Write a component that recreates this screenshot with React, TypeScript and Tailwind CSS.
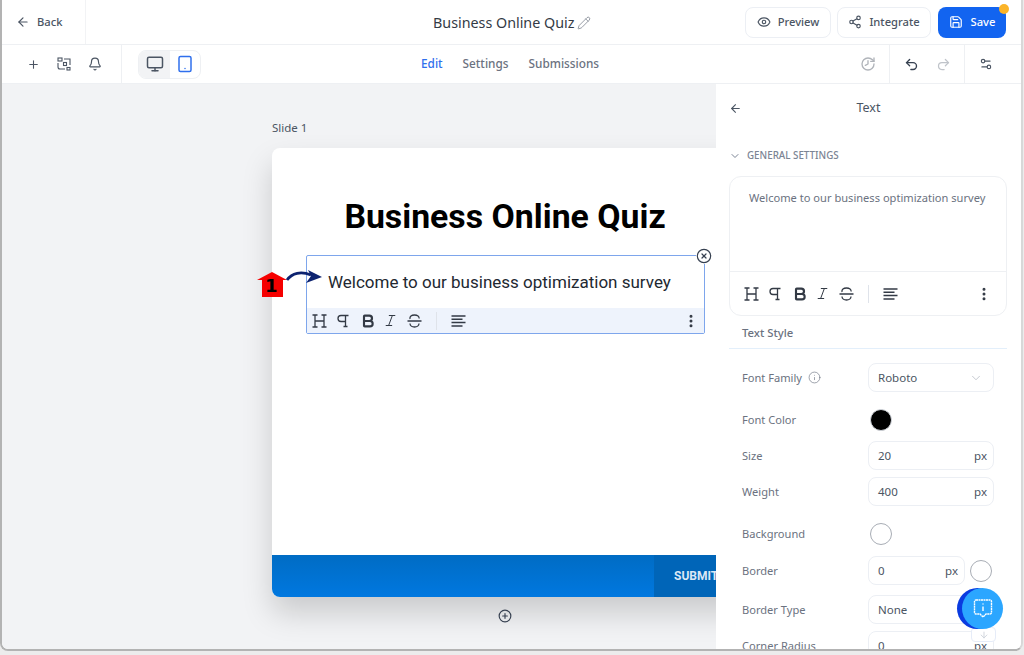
import { ArrowLeft, ArrowDown, Plus, Bell, Monitor, Tablet, Pencil, Eye, Share2, Save, History, Undo2, Redo2, Settings2, ChevronDown, Info, Bold, Italic, EllipsisVertical, CircleX, CirclePlus } from "lucide-react";

const ui = "font-['Noto_Sans','Open_Sans',sans-serif]";

function Toolbar({ className }: { className: string }) {
  return (
    <div className={`flex items-center text-[#333a45] ${className}`}>
      <svg width="15" height="16" viewBox="0 0 15 16" fill="none" stroke="currentColor" strokeWidth="1.3" className="mr-[10px]">
        <path d="M3 2v12M12 2v12M3 8h9M0.500 2h5M9.500 2h5M0.500 14h5M9.500 14h5" />
      </svg>
      <svg width="12" height="16" viewBox="0 0 12 16" fill="none" stroke="currentColor" strokeWidth="1.3" className="mr-[11px]">
        <path d="M11.500 2.500H4a3 3 0 0 0 0 6h4.500M8.500 2.500v11M6.500 13.500h4" />
      </svg>
      <Bold size={16} strokeWidth={3.2} className="mr-[7px]" />
      <Italic size={15} strokeWidth={1.6} className="mr-[9px]" />
      <svg width="15" height="16" viewBox="0 0 15 16" fill="none" stroke="currentColor" strokeWidth="1.3">
        <path d="M0.500 8h14M3 6c-.5-2.500 1.500-4 4.500-4s5 1.500 4.500 3.500M3 10.500c0 2 2 3.500 4.500 3.500s4.500-1.500 4.500-3.500" />
      </svg>
      <div className="mx-[14px] h-[18px] w-px bg-[#dfe3ea]" />
      <svg width="15" height="12" viewBox="0 0 15 12" fill="none" stroke="currentColor" strokeWidth="1.5">
        <path d="M0.500 1h14M0.500 4.300h11M0.500 7.600h14M0.500 11h11" />
      </svg>
      <EllipsisVertical size={16} strokeWidth={2.5} className="ml-auto" />
    </div>
  );
}

function Field({ value, unit, chevron, width = "w-[126px]" }: { value: string; unit?: string; chevron?: boolean; width?: string }) {
  return (
    <div className={`flex h-[29px] ${width} shrink-0 items-center justify-between rounded-lg border border-[#eceff4] bg-white pl-[9px] pr-[6px] text-[11.500px] leading-[15px] text-[#4b5563]`}>
      <span className="-mt-[1px]">{value}</span>
      {unit ? <span>{unit}</span> : null}
      {chevron ? <ChevronDown size={14} strokeWidth={1} className="mr-1 text-[#9ca3af]" /> : null}
    </div>
  );
}

function Row({ label, className, children }: { label: React.ReactNode; className: string; children: React.ReactNode }) {
  return (
    <div className={`flex items-center ${className}`}>
      <span className="flex w-[126px] shrink-0 items-center gap-[6px] pt-[1px] text-[11.100px] text-[#6b7280]">{label}</span>
      {children}
    </div>
  );
}

export default function App() {
  return (
    <div className={`h-[655px] w-[1024px] overflow-hidden bg-[#ececec] ${ui}`}>
      <div className="h-[651px] w-[1023px] overflow-hidden rounded-b-lg border-b-2 border-l-2 border-r-2 border-b-[#b3b3b3] border-l-[#b3b3b3] border-r-[#d8d8d8] bg-white">
        <div className="flex h-[45px] items-center border-b border-[#eef0f3]">
          <div className="flex h-full w-[84px] items-center gap-[7px] border-r border-[#f2f3f5] pl-[14px] text-[11.200px] font-medium text-[#4b5563]">
            <ArrowLeft size={14} />
            <span>Back</span>
          </div>
          <div className="flex flex-1 items-center pl-[347px] pt-[2px] text-[14.300px] text-[#333a45]">
            <span>Business Online Quiz</span>
            <Pencil size={14} strokeWidth={1.2} className="ml-[3px] text-[#6b7280]" />
          </div>
          <div className="flex items-center gap-[6px] pr-[15px]">
            <div className="flex h-[31px] w-[86px] items-center justify-center gap-[7px] rounded-lg border border-[#eceff4] text-[11.200px] font-medium text-[#4b5563]">
              <Eye size={14} /> Preview
            </div>
            <div className="flex h-[31px] w-[94px] items-center justify-center gap-[7px] rounded-lg border border-[#eceff4] text-[11.200px] font-medium text-[#4b5563]">
              <Share2 size={14} /> Integrate
            </div>
            <div className="relative ml-px flex h-[31px] w-[68px] items-center justify-center gap-[8px] rounded-lg bg-[#1264f0] text-[11.200px] font-medium text-white">
              <Save size={14} /> Save
              <span className="absolute -right-[3px] -top-[3px] h-[10px] w-[10px] rounded-full bg-[#fbb429]" />
            </div>
          </div>
        </div>
        <div className="flex h-[39px] items-center border-b border-[#eef0f3]">
          <div className="flex h-full w-[120px] items-center gap-[17px] border-r border-[#eef0f3] pl-[25px] text-[#4b5563]">
            <Plus size={13} />
            <svg width="14" height="14" viewBox="0 0 14 14" fill="none" stroke="currentColor" strokeWidth="1.100">
              <rect x="1" y="1" width="4" height="3" />
              <rect x="6.500" y="5.500" width="3" height="3" />
              <rect x="10" y="10.500" width="3" height="2.500" />
              <path d="M7 2h6v6M1 6v4a2 2 0 0 0 2 2h5" />
            </svg>
            <Bell size={14} />
          </div>
          <div className="ml-[16px] flex h-[29px] w-[63px] items-center overflow-hidden rounded-lg border border-[#eef0f3]">
            <div className="flex h-full w-[31px] items-center justify-center bg-[#f2f3f5] text-[#4b5563]">
              <Monitor size={18} />
            </div>
            <div className="flex h-full flex-1 items-center justify-center text-[#2f6fed]">
              <Tablet size={18} />
            </div>
          </div>
          <div className="flex flex-1 items-center gap-[20px] pl-[220px] text-[11.800px] font-medium text-[#6b7280]">
            <span className="text-[#2f6fed]">Edit</span>
            <span>Settings</span>
            <span>Submissions</span>
          </div>
          <div className="flex h-full items-center pr-[13px] text-[#b0b4ba]">
            <History size={16} className="-scale-x-100" />
          </div>
          <div className="flex h-full w-[75px] items-center gap-[17px] border-l border-[#eef0f3] pl-[14px]">
            <Undo2 size={15} strokeWidth={2.2} className="text-[#374151]" />
            <Redo2 size={15} className="text-[#c0c4ca]" />
          </div>
          <div className="flex h-full w-[57px] items-center border-l border-[#eef0f3] pl-[14px] text-[#4b5563]">
            <Settings2 size={14} />
          </div>
        </div>
        <div className="relative flex h-[567px]">
          <div className="flex-1 overflow-hidden bg-[#f2f3f5] pl-[270px] pt-[37px]">
            <p className="mb-[13px] h-[14px] text-[11.500px] leading-[14px] text-[#4b5563]">Slide 1</p>
            <div className="flex h-[449px] w-[500px] flex-col overflow-hidden rounded-lg bg-white font-['Roboto',sans-serif] shadow-[0_16px_30px_rgba(0,0,0,0.17)]">
              <div className="flex-1 pl-[34px] pt-[47px]">
                <h1 className="w-[398px] text-center text-[33.800px] font-bold leading-[44px] text-black">Business Online Quiz</h1>
                <div className="relative mt-[16px] flex h-[79px] w-[399px] flex-col rounded-[2px] border border-[#7ea6ec]">
                  <p className="flex-1 pl-[21px] pt-[14px] text-[17px] leading-[24px] text-[#222831]">Welcome to our business optimization survey</p>
                  <Toolbar className="h-[25px] bg-[#eef3fc] pl-[5px] pr-[5px]" />
                  <CircleX size={16} strokeWidth={1.800} className="absolute -right-[8px] -top-[8px] rounded-full bg-white text-[#374151]" />
                </div>
              </div>
              <div className="flex h-[42px] justify-end bg-gradient-to-b from-[#006cc4] to-[#0078e0]">
                <div className="flex w-[118px] items-center bg-[#0065b8] pl-[20px] text-[12px] font-bold text-[#dbe7f5]">
                  SUBMIT
                </div>
              </div>
            </div>
            <div className="mt-[12px] flex w-[240px] justify-end">
              <CirclePlus size={14} className="text-[#374151]" />
            </div>
          </div>
          <div className="h-full w-[305px] shrink-0 overflow-hidden bg-white px-[13px] pt-[17px]">
            <div className="flex h-[14px] items-center text-[12.500px] text-[#4b5563]">
              <ArrowLeft size={13} className="-mr-[13px]" />
              <span className="flex-1 text-center">Text</span>
            </div>
            <div className="mt-[34px] flex h-[14px] items-center gap-[6px] text-[9.800px] font-medium text-[#7b8494]">
              <ChevronDown size={12} />
              <span>GENERAL SETTINGS</span>
            </div>
            <div className="mt-[13px] h-[140px] w-[278px] rounded-xl border border-[#eef0f3]">
              <p className="h-[95px] border-b border-[#eef0f3] pl-[19px] pt-[12px] text-[11.100px] leading-[17px] text-[#6b7280]">
                Welcome to our business optimization survey
              </p>
              <Toolbar className="h-[43px] px-[14px]" />
            </div>
            <p className="mt-[8px] h-[17px] pl-[13px] text-[11.300px] font-medium leading-[17px] text-[#6b7280]">Text Style</p>
            <div className="mt-[7px] h-px w-[278px] bg-[#e3effb]" />
            <div className="pl-[13px]">
              <Row label={<>Font Family <Info size={13} strokeWidth={1.2} /></>} className="mt-[14px] h-[29px]">
                <Field value="Roboto" chevron />
              </Row>
              <Row label="Font Color" className="mt-[13px] h-[29px]">
                <span className="ml-[2px] h-[22px] w-[22px] rounded-full border border-[#d1d5db] bg-black" />
              </Row>
              <Row label="Size" className="mt-[7px] h-[29px]">
                <Field value="20" unit="px" />
              </Row>
              <Row label="Weight" className="mt-[7px] h-[29px]">
                <Field value="400" unit="px" />
              </Row>
              <Row label="Background" className="mt-[13px] h-[29px]">
                <span className="ml-[2px] h-[22px] w-[22px] rounded-full border border-[#a8adb5] bg-white" />
              </Row>
              <Row label="Border" className="mt-[8px] h-[29px]">
                <Field value="0" unit="px" width="w-[97px]" />
                <span className="ml-[5px] h-[22px] w-[22px] rounded-full border border-[#a8adb5] bg-white" />
              </Row>
              <Row label="Border Type" className="mt-[10px] h-[29px]">
                <Field value="None" />
              </Row>
              <Row label="Corner Radius" className="mt-[7px] h-[29px]">
                <Field value="0" unit="px" />
              </Row>
            </div>
          </div>
          {/* scroll button behind the chat bubble */}
          <div className="absolute left-[969px] top-[543px] flex h-[15px] w-[25px] items-center justify-center rounded border border-[#e6ecf8] bg-white text-[#c9ced6]">
            <ArrowDown size={10} />
          </div>
          {/* chat bubble */}
          <div className="absolute left-[955px] top-[504px] h-[41px] w-[41px] rounded-full bg-[#0a3be0]" />
          <div className="absolute left-[960px] top-[504px] flex h-[41px] w-[41px] items-center justify-center rounded-full bg-[#2ba6ff]">
            <svg width="20" height="22" viewBox="0 0 20 22" fill="none" stroke="white" strokeWidth="1.400" strokeDasharray="2 0.500">
              <path d="M3 2h14a1.500 1.500 0 0 1 1.500 1.500v11a1.500 1.500 0 0 1-1.500 1.500h-4l-3 3-3-3H3a1.500 1.500 0 0 1-1.500-1.500v-11A1.500 1.500 0 0 1 3 2Z" />
              <path d="M10 8.500v4.500M10 5.500v1" strokeDasharray="none" />
            </svg>
          </div>
          {/* step marker */}
          <svg width="68" height="34" viewBox="0 0 68 34" className="absolute left-[254px] top-[183px]">
            <path d="M16 5 31 13H27V30H6V13H1Z" fill="#f50000" />
            <path d="M31 13c5-7 14-9 24-5" fill="none" stroke="#0d2370" strokeWidth="2.800" />
            <path d="M52 3 66 10 50 16l5-7Z" fill="#0d2370" />
          </svg>
          <span className="absolute left-[263px] top-[192px] font-['DejaVu_Sans',sans-serif] text-[18px] font-bold leading-[20px] text-black">1</span>
        </div>
      </div>
    </div>
  );
}
